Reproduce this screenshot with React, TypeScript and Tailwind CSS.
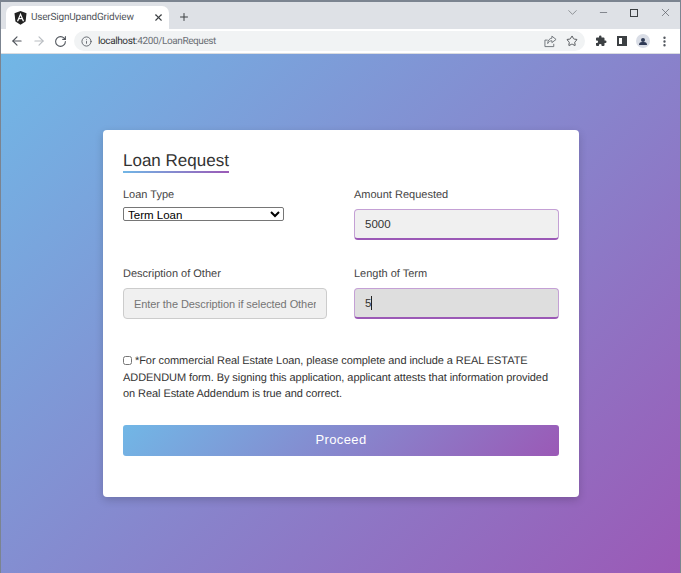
import React from "react";
import { ArrowLeft, ArrowRight, RotateCw, Info, Star, Plus, X, Minus, ChevronDown, EllipsisVertical } from "lucide-react";

// ── Browser chrome ──────────────────────────────────────────────────────────

function AngularLogo() {
	return (
		<svg width="13" height="14" viewBox="0 0 24 26">
			<path d="M12 0 L0.8 4 L2.6 19.6 L12 25.6 L21.4 19.6 L23.2 4 Z" fill="#222" />
			<path d="M12 3.4 L5.2 19 H7.9 L9.3 15.4 H14.7 L16.1 19 H18.8 Z M12 8.8 L13.8 13.2 H10.2 Z" fill="#fff" fillRule="evenodd" />
		</svg>
	);
}

function ShareIcon() {
	return (
		<svg width="13" height="13" viewBox="0 0 14 14" fill="none" stroke="#6b7076" strokeWidth="1">
			<path d="M1 5.5 V12.5 H10.5 V9.5" />
			<path d="M1 5.5 H4" />
			<path d="M8.5 1.2 L13 4.8 L8.5 8.2 V6.2 C6.5 6.2 5 7.2 4 9.2 C4 6 6 3.6 8.5 3.4 Z" />
		</svg>
	);
}

function PuzzleIcon() {
	return (
		<svg width="12" height="12" viewBox="0 0 24 24" fill="#3c4043">
			<path d="M20.5 11H19V7a2 2 0 0 0-2-2h-4V3.5a2.5 2.5 0 0 0-5 0V5H4a2 2 0 0 0-2 2v3.8h1.5a2.7 2.7 0 0 1 0 5.4H2V20a2 2 0 0 0 2 2h3.8v-1.5a2.7 2.7 0 0 1 5.4 0V22H17a2 2 0 0 0 2-2v-4h1.5a2.5 2.5 0 0 0 0-5z" />
		</svg>
	);
}

function BrowserChrome() {
	return (
		<div className="shrink-0">
			{/* Tab strip */}
			<div className="h-[29px] bg-[#dee1e6] border-t-2 border-[#7b8490] flex items-end pl-[5px] pr-[5px]">
				<div className="w-[163px] h-[23px] bg-white rounded-t-[7px] flex items-center pl-[8px] pr-[5px]">
					<AngularLogo />
					<span className="ml-[4px] flex-1 text-[10px] tracking-[-0.2px] text-[#50545a] font-['Roboto',sans-serif]">UserSignUpandGridview</span>
					<X size={11} strokeWidth={2.4} color="#3c4043" />
				</div>
				<div className="ml-[9px] mb-[5px] w-[12px] flex justify-center">
					<Plus size={14} strokeWidth={2} color="#3c4043" />
				</div>
				<div className="flex-1 self-start flex items-center justify-end h-[19px] mt-[1px] text-[#50555c]">
					<ChevronDown size={15} strokeWidth={1} color="#5f6368" />
					<Minus size={11} strokeWidth={1.4} className="ml-[18px]" />
					<div className="ml-[21px] w-[8px] h-[8px] border border-[#3c4043]" />
					<X size={13} strokeWidth={1.2} className="ml-[21px] mr-[3px]" />
				</div>
			</div>
			{/* Toolbar */}
			<div className="h-[25px] bg-white flex items-center pl-[9px] pr-[9px] border-b border-[#dadce0]">
				<ArrowLeft size={14} strokeWidth={2} color="#50555c" />
				<ArrowRight size={14} strokeWidth={2} color="#b9bdc2" className="ml-[8px]" />
				<RotateCw size={13} strokeWidth={2} color="#50555c" className="ml-[8px]" />
				<div className="ml-[7px] w-[511px] h-[20px] bg-[#f1f3f4] rounded-full flex items-center pl-[7px] pr-[7px]">
					<Info size={11} strokeWidth={1.8} color="#50555c" />
					<span className="ml-[6px] flex-1 text-[10px] tracking-[-0.4px] text-[#6b7076] font-['Roboto',sans-serif]">
						<span className="text-[#2f3235]">localhost</span>:4200/LoanRequest
					</span>
					<ShareIcon />
					<Star size={12} strokeWidth={1.8} color="#44474c" className="ml-[9px]" />
				</div>
				<div className="ml-[10px]"><PuzzleIcon /></div>
				<div className="ml-[10px] w-[10px] h-[10px] border-2 border-[#3c4043] border-r-[5px]" />
				<div className="ml-[9px] w-[14px] h-[14px] rounded-full bg-[#d9dde6] flex flex-col items-center justify-center">
					<div className="w-[4px] h-[4px] rounded-full bg-[#2f3a55]" />
					<div className="w-[8px] h-[3px] rounded-t-sm bg-[#2f3a55]" />
				</div>
				<EllipsisVertical size={13} strokeWidth={2.4} color="#50555c" className="ml-[8px]" />
			</div>
		</div>
	);
}

// ── Form ────────────────────────────────────────────────────────────────────

function Label({ children }: { children: React.ReactNode }) {
	return <label className="block text-[11px] leading-[16px] text-[#444]">{children}</label>;
}

const focusedInput =
	"block w-full h-[31px] pl-[10px] pr-2 text-[11.5px] text-[#333] rounded-[4px] outline-none border border-[#c4a0d5] border-b-2 border-b-[#9b59b6]";

export default function App() {
	return (
		<div className="w-[681px] h-[573px] flex flex-col overflow-hidden border-x border-[#7b8490] font-['Liberation_Sans',Arial,sans-serif] [text-rendering:geometricPrecision]">
			<BrowserChrome />
			<div className="flex-1 bg-[linear-gradient(135deg,#71b7e6,#9b59b6)] pl-[102px] pt-[76px]">
				<div className="w-[476px] h-[367px] bg-white rounded-[4px] shadow-[0_3px_8px_rgba(0,0,0,0.18)] pt-[21px] px-[20px]">
					<div className="w-fit">
						<h1 className="text-[17px] leading-[20px] text-[#333]">Loan Request</h1>
						<div className="h-[2px] w-[106px] bg-[linear-gradient(135deg,#71b7e6,#9b59b6)]" />
					</div>

					<div className="mt-[14px] grid grid-cols-[204px_205px] gap-x-[27px]">
						<div className="h-[79px]">
							<Label>Loan Type</Label>
							<select className="block mt-[4px] w-[161px] h-[14px] bg-white text-[11.5px] leading-[12px] text-black border border-[#767676] rounded-[2px]">
								<option>Term Loan</option>
							</select>
						</div>
						<div className="h-[79px]">
							<Label>Amount Requested</Label>
							<input readOnly value="5000" className={`${focusedInput} mt-[6px] bg-[#f0f0f0]`} />
						</div>
						<div>
							<Label>Description of Other</Label>
							<input
								readOnly
								placeholder="Enter the Description if selected Other"
								className="block mt-[6px] w-full h-[31px] pl-[10px] pr-[10px] text-[11px] tracking-[-0.08px] placeholder:text-[#757575] rounded-[4px] outline-none bg-[#f0f0f0] border border-[#cccccc]"
							/>
						</div>
						<div>
							<Label>Length of Term</Label>
							<div className="relative mt-[6px]">
								<input readOnly value="5" className={`${focusedInput} bg-[#dedede]`} />
								<span className="absolute left-[17px] top-[8px] w-px h-[14px] bg-[#222]" />
							</div>
						</div>
					</div>

					<p className="mt-[34px] w-[436px] text-[11px] tracking-[-0.07px] leading-[16.5px] text-[#333]">
						<input type="checkbox" className="w-[9px] h-[9px] mr-[3px] ml-0 align-[-0.5px]" />
						*For commercial Real Estate Loan, please complete and include a REAL ESTATE ADDENDUM form. By signing this application, applicant attests that information provided on Real Estate Addendum is true and correct.
					</p>

					<button
						type="button"
						className="mt-[22px] block w-[436px] h-[31px] rounded-[3px] bg-[linear-gradient(135deg,#71b7e6,#9b59b6)] text-white text-[13px] tracking-[0.4px] font-medium"
					>
						Proceed
					</button>
				</div>
			</div>
		</div>
	);
}
